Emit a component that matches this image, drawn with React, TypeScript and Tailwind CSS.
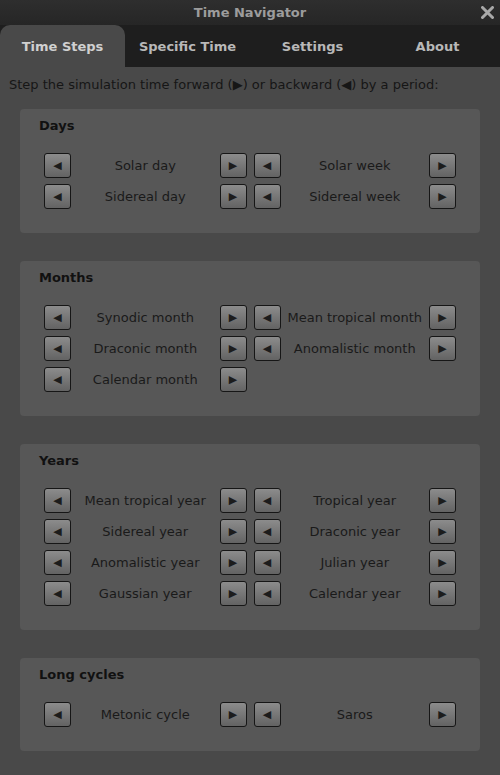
import React from "react"

type Section = { title: string; items: string[] }

const sections: Section[] = [
  { title: "Days", items: ["Solar day", "Solar week", "Sidereal day", "Sidereal week"] },
  {
    title: "Months",
    items: ["Synodic month", "Mean tropical month", "Draconic month", "Anomalistic month", "Calendar month"],
  },
  {
    title: "Years",
    items: [
      "Mean tropical year",
      "Tropical year",
      "Sidereal year",
      "Draconic year",
      "Anomalistic year",
      "Julian year",
      "Gaussian year",
      "Calendar year",
    ],
  },
  { title: "Long cycles", items: ["Metonic cycle", "Saros"] },
]

const tabs = ["Time Steps", "Specific Time", "Settings", "About"]

function StepButton({ dir }: { dir: "back" | "fwd" }) {
  return (
    <button className="w-[27px] h-[25px] shrink-0 flex items-center justify-center rounded-[3px] border border-[#161616] bg-gradient-to-b from-[#8c8c8c] to-[#636363] text-[#1c1c1c] text-[11px] leading-none">
      {dir === "back" ? "◀" : "▶"}
    </button>
  )
}

function Step({ label }: { label: string }) {
  return (
    <div className="flex items-center">
      <StepButton dir="back" />
      <span className="flex-1 text-center text-[13px] text-[#1a1a1a] whitespace-nowrap">{label}</span>
      <StepButton dir="fwd" />
    </div>
  )
}

export default function App() {
  return (
    <div className="w-[500px] h-[775px] bg-[#494949] font-['DejaVu_Sans',sans-serif] overflow-hidden">
      {/* Title bar */}
      <div className="relative h-[25px] bg-gradient-to-b from-[#2e2e2e] to-[#262626] flex items-center justify-center">
        <span className="text-[13px] font-bold text-[#9c9c9c]">Time Navigator</span>
        <svg className="absolute right-[6px] top-[6px]" width="13" height="13" viewBox="0 0 13 13">
          <path d="M1.5 1.5 L11.5 11.5 M11.5 1.5 L1.5 11.5" stroke="#a8a8a8" strokeWidth="3" strokeLinecap="round" />
        </svg>
      </div>

      {/* Tabs */}
      <div className="h-[42px] bg-[#1e1e1e] flex">
        {tabs.map((tab, i) => (
          <div
            key={tab}
            className={
              i === 0
                ? "w-[125px] pt-[2px] flex items-center justify-center rounded-t-[10px] bg-[#494949] text-[13px] font-bold text-[#d0d0d0]"
                : "w-[125px] pt-[2px] flex items-center justify-center text-[13px] font-bold text-[#b8b8b8]"
            }
          >
            {tab}
          </div>
        ))}
      </div>

      <p className="pl-[9px] pt-[9px] h-[42px] text-[13px] leading-[18px] text-[#161616]">
        Step the simulation time forward (▶) or backward (◀) by a period:
      </p>

      <div className="px-[20px] flex flex-col gap-[28px]">
        {sections.map((s) => (
          <div key={s.title} className="rounded-[4px] bg-[#575757] px-[24px] pt-[9px] pb-[24px]">
            <h3 className="-ml-[5px] h-[16px] leading-[16px] text-[13px] font-bold text-[#111]">{s.title}</h3>
            <div className="mt-[19px] grid grid-cols-2 gap-x-[7px] gap-y-[6px]">
              {s.items.map((item) => (
                <Step key={item} label={item} />
              ))}
            </div>
          </div>
        ))}
      </div>
    </div>
  )
}
